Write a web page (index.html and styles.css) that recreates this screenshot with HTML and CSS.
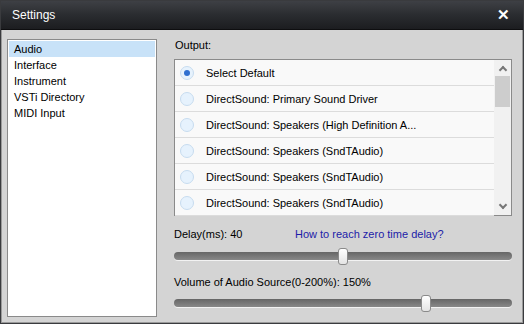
FILE: index.html
```html
<!DOCTYPE html>
<html lang="en">
<head>
    <meta charset="UTF-8">
    <title>Settings</title>
    <link rel="stylesheet" href="styles.css">
</head>
<body>
    <div class="window">
        <div class="titlebar">
            <span class="title">Settings</span>
            <span class="close">&#x2715;</span>
        </div>
        <div class="content">
            <ul class="nav">
                <li class="active">Audio</li>
                <li>Interface</li>
                <li>Instrument</li>
                <li>VSTi Directory</li>
                <li>MIDI Input</li>
            </ul>
            <div class="panel">
                <div class="label">Output:</div>
                <div class="devices">
                    <ul class="device-list">
                        <li class="checked"><span class="radio"></span>Select Default</li>
                        <li><span class="radio"></span>DirectSound: Primary Sound Driver</li>
                        <li><span class="radio"></span>DirectSound: Speakers (High Definition A...</li>
                        <li><span class="radio"></span>DirectSound: Speakers (SndTAudio)</li>
                        <li><span class="radio"></span>DirectSound: Speakers (SndTAudio)</li>
                        <li><span class="radio"></span>DirectSound: Speakers (SndTAudio)</li>
                    </ul>
                    <div class="scrollbar">
                        <span class="arrow up"></span>
                        <div class="thumb"></div>
                        <span class="arrow down"></span>
                    </div>
                </div>
                <div class="row delay-row">
                    <span class="delay-label">Delay(ms): 40</span>
                    <a class="link" href="#">How to reach zero time delay?</a>
                </div>
                <div class="slider"><div class="knob" style="left: 48.5%"></div></div>
                <div class="row volume-row">
                    <span>Volume of Audio Source(0-200%): 150%</span>
                </div>
                <div class="slider"><div class="knob" style="left: 73%"></div></div>
            </div>
        </div>
    </div>
</body>
</html>
```

FILE: styles.css
```css
body {
    margin: 0;
    font-family: "Liberation Sans", Arial, sans-serif;
    font-size: 11px;
    color: #000;
}
.window {
    width: 524px;
    height: 324px;
    box-sizing: border-box;
    border: 1px solid #3a3b3e;
    background: #d4d4d4;
    display: flex;
    flex-direction: column;
}
.titlebar {
    flex-shrink: 0;
    height: 28px;
    background: linear-gradient(#3e4045, #2a2c30 50%, #1c1d20);
    border-bottom: 1px solid #0e0e10;
    display: flex;
    align-items: center;
    justify-content: space-between;
    padding: 0 13px 0 11px;
}
.title {
    color: #fff;
    font-size: 12px;
}
.close {
    color: #fff;
    font-weight: bold;
    font-size: 15px;
}
.content {
    flex: 1;
    min-height: 0;
    display: flex;
    gap: 17px;
    padding: 9px 10px 5px 5px;
    border-left: 1px solid #9a9a9a;
    border-right: 1px solid #9a9a9a;
    border-bottom: 1px solid #9a9a9a;
}
.nav {
    list-style: none;
    margin: 0;
    padding: 1px;
    width: 146px;
    background: #fff;
    border: 1px solid #8a8a8a;
}
.nav li {
    height: 16px;
    line-height: 16px;
    padding-left: 5px;
}
.nav li.active {
    background: #c8e2f8;
}
.panel {
    flex: 1;
    display: flex;
    flex-direction: column;
}
.label {
    height: 20px;
    line-height: 13px;
    padding-left: 1px;
}
.devices {
    display: flex;
    flex-shrink: 0;
    height: 157px;
    box-sizing: border-box;
    border: 1px solid #8a8a8a;
    background: #fff;
}
.device-list {
    list-style: none;
    margin: 0;
    padding: 0;
    flex: 1;
}
.device-list li {
    height: 25px;
    border-bottom: 1px solid #dcdcdc;
    background: #f9f9f9;
    display: flex;
    align-items: center;
}
.radio {
    width: 14px;
    height: 14px;
    box-sizing: border-box;
    border-radius: 50%;
    border: 1px solid #c7dcef;
    background: #e6f2fd;
    margin: 0 12px 0 5px;
    display: flex;
    align-items: center;
    justify-content: center;
}
.checked .radio::after {
    content: "";
    width: 6px;
    height: 6px;
    border-radius: 50%;
    background: #2f6fd0;
}
.scrollbar {
    width: 17px;
    background: #f1f1f1;
    display: flex;
    flex-direction: column;
    align-items: center;
}
.arrow {
    height: 16px;
    display: flex;
    align-items: center;
}
.arrow::after {
    content: "";
    width: 4px;
    height: 4px;
    border-left: 2px solid #777;
    border-top: 2px solid #777;
}
.up::after {
    transform: rotate(45deg);
    margin-top: 4px;
}
.down::after {
    transform: rotate(225deg);
    margin-bottom: 4px;
}
.thumb {
    width: 15px;
    height: 31px;
    background: #cdcdcd;
}
.scrollbar .down {
    margin-top: auto;
}
.row {
    display: flex;
    flex-shrink: 0;
    height: 16px;
    line-height: 16px;
}
.delay-row {
    margin-top: 10px;
}
.volume-row {
    margin-top: 14px;
}
.delay-label {
    width: 121px;
}
.link {
    color: #1c1ca8;
    text-decoration: none;
}
.slider {
    position: relative;
    flex-shrink: 0;
    height: 8px;
    margin-top: 10px;
    border-radius: 4px;
    background: linear-gradient(#666, #888);
    box-shadow: 0 1px 0 #f2f2f2;
}
.volume-row + .slider {
    margin-top: 9px;
}
.knob {
    position: absolute;
    top: -4px;
    width: 10px;
    height: 17px;
    box-sizing: border-box;
    border: 1px solid #8a8a8a;
    border-radius: 3px;
    background: linear-gradient(#fff, #e4e4e4);
}
```
